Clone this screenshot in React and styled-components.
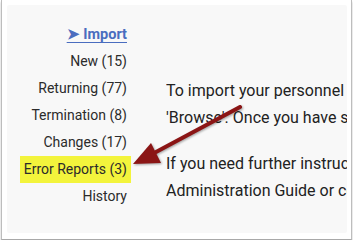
import styled, { createGlobalStyle } from 'styled-components'

const GlobalStyle = createGlobalStyle`
  html, body {
    margin: 0;
    padding: 0;
    background: #ffffff;
  }
  body {
    font-family: Roboto, "Liberation Sans", sans-serif;
  }
`

const Frame = styled.div`
  position: relative;
  box-sizing: border-box;
  width: 351px;
  height: 240px;
  margin-left: 1px;
  padding: 5px 4px 5px 5px;
  background: #ffffff;
  border-left: 1px solid #bdbdbd;
  border-right: 1px solid #bdbdbd;
  border-bottom: 1px solid #a8a8a8;
  box-shadow: 0 2px 2px rgba(0, 0, 0, 0.25);
`

const Panel = styled.div`
  display: flex;
  box-sizing: border-box;
  height: 228px;
  padding-top: 16px;
  background: #f8f8f8;
  border-radius: 2px;
  overflow: hidden;
`

const Sidebar = styled.ul`
  display: flex;
  flex-direction: column;
  align-items: flex-end;
  flex: 0 0 124px;
  margin: 0;
  padding: 0;
  list-style: none;
`

const NavItem = styled.li`
  box-sizing: border-box;
  height: 27px;
  line-height: 27px;
  padding: 0 4px;
  font-size: ${({ $active }) => ($active ? '14.5px' : '14px')};
  color: ${({ $active }) => ($active ? '#4a6dbf' : '#2b2b2b')};
  font-weight: ${({ $active }) => ($active ? 700 : 400)};
  background: ${({ $highlight }) => ($highlight ? '#f3f43c' : 'transparent')};
  white-space: nowrap;

  span {
    text-decoration: ${({ $active }) => ($active ? 'underline' : 'none')};
    text-underline-offset: 3px;
  }
`

const Content = styled.div`
  flex: 1;
  min-width: 0;
  margin: 56px 0 0 35px;
  overflow: hidden;
`

const Paragraph = styled.p`
  margin: 0 0 19px 0;
  font-size: 16px;
  line-height: 27px;
  color: #222222;
  white-space: nowrap;
`

const ArrowSvg = styled.svg`
  position: absolute;
  left: 0;
  top: 0;
  pointer-events: none;
  filter: drop-shadow(1px 1px 1px rgba(0, 0, 0, 0.35));
`

const items = [
  { label: 'New (15)' },
  { label: 'Returning (77)' },
  { label: 'Termination (8)' },
  { label: 'Changes (17)' },
  { label: 'Error Reports (3)', highlight: true },
  { label: 'History' },
]

function Arrow() {
  return (
    <ArrowSvg width="353" height="241" viewBox="0 0 353 241">
      <line x1="238" y1="107" x2="154" y2="152" stroke="#8b1515" strokeWidth="4" strokeLinecap="round" />
      <polygon points="131,164 159,163 149,143" fill="#8b1515" />
    </ArrowSvg>
  )
}

export default function App() {
  return (
    <>
      <GlobalStyle />
      <Frame>
        <Panel>
          <Sidebar>
            <NavItem $active>
              <span>➤ Import</span>
            </NavItem>
            {items.map((item, index) => (
              <NavItem key={`nav-${index}`} $highlight={item.highlight}>
                {item.label}
              </NavItem>
            ))}
          </Sidebar>
          <Content>
            <Paragraph>
              To import your personnel file,
              <br />
              'Browse'. Once you have selected
            </Paragraph>
            <Paragraph>
              If you need further instructions,
              <br />
              Administration Guide or contact
            </Paragraph>
          </Content>
        </Panel>
        <Arrow />
      </Frame>
    </>
  )
}
